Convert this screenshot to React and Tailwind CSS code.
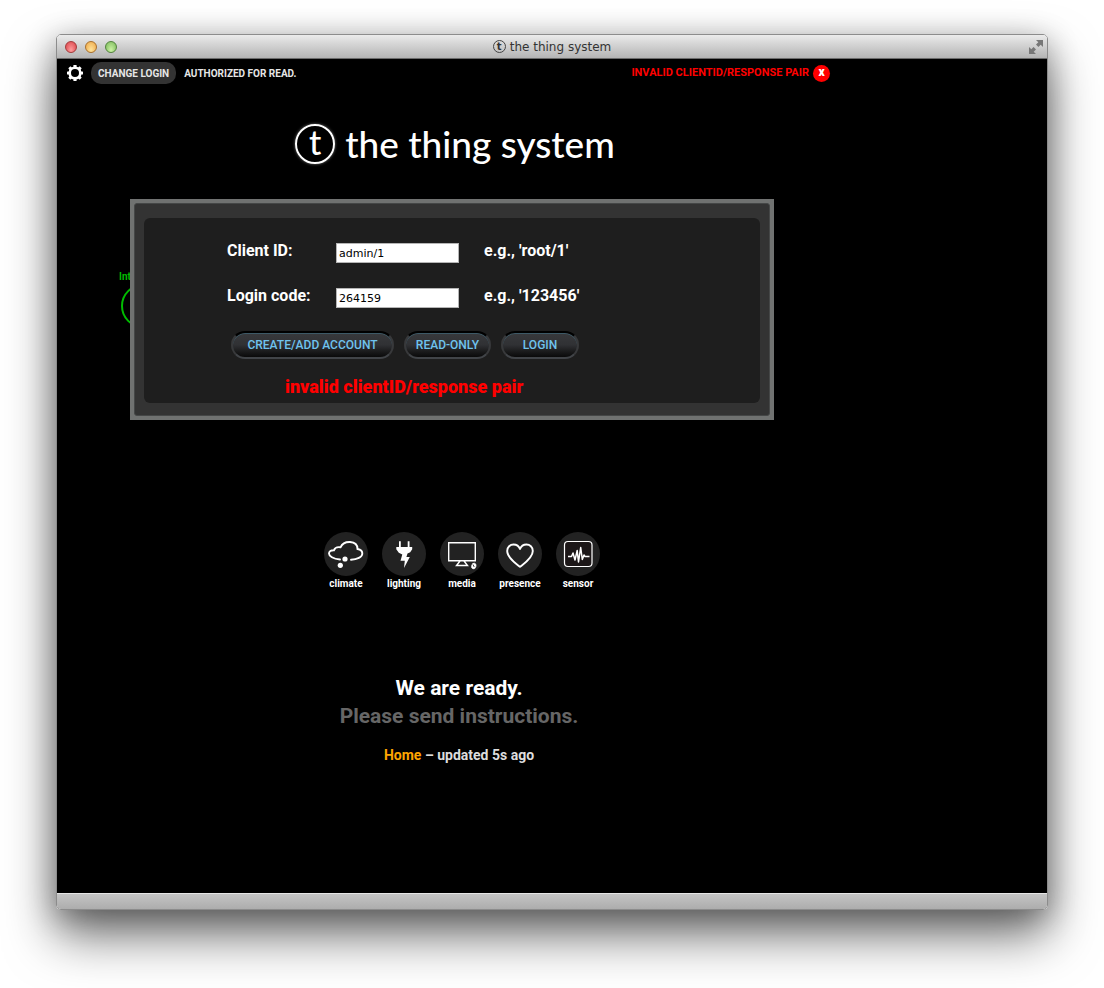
import React from "react";

function Gear() {
  const teeth = [0, 45, 90, 135, 180, 225, 270, 315];
  return (
    <svg viewBox="0 0 16 16" className="size-4" aria-hidden="true">
      <circle cx="8" cy="8" r="5.3" fill="none" stroke="#fff" strokeWidth="2.6" />
      {teeth.map((a) => (
        <rect key={a} x="6.4" y="0" width="3.2" height="3" rx=".5" fill="#fff" transform={`rotate(${a} 8 8)`} />
      ))}
    </svg>
  );
}

function Expand() {
  return (
    <svg viewBox="0 0 14 14" className="h-3.5 w-3.5" aria-hidden="true">
      <path d="M7 0h7v7l-2.3-2.3L9.4 7 7 4.6l2.3-2.3zM0 7l2.3 2.3L4.6 7 7 9.4l-2.3 2.3L7 14H0z" fill="#777" />
    </svg>
  );
}

const icons = {
  climate: (
    <>
      <path d="M16 27.500C9 27 5 24 5 21.500c0-2 2-3.500 5-3.300C11 15.500 13.500 14.800 16.500 15.300 18 12 21.500 9.800 26 10c4.500.3 7.500 2.500 7.500 7C36.500 17.500 38.500 19.500 38.300 22c-.3 3-5 5.500-11.300 5.700" fill="none" stroke="#fff" strokeWidth="1.900" strokeLinecap="round" />
      <circle cx="21" cy="27" r="2.600" fill="#fff" />
      <circle cx="16.300" cy="33.300" r="2.600" fill="#fff" />
    </>
  ),
  lighting: (
    <path d="M17 9.300h1.800V15h6.900V9.300h1.800V15h2.700v2.200l-2 3-2.700 1.400-1.100 3.400h3.400L22 36l.8-7.300h-4.300l1.800-6.200-3.500-1.800-2.500-3.500V15H17z" fill="#fff" />
  ),
  media: (
    <g fill="none" stroke="#fff" strokeWidth="1.400">
      <path d="M8.700 10.700h26.600v18H8.700zM20 29l-3.500 4.500h11L24 29" />
      <ellipse cx="33.800" cy="34" rx="2.200" ry="2.900" transform="rotate(15 33.800 34)" fill="#fff" strokeWidth=".6" />
      <path d="M33 32.500l1.200 2.500" stroke="#444" strokeWidth="1" />
    </g>
  ),
  presence: (
    <path d="M22 34.800C18 31.500 9.200 26 9.200 19c0-4 3-6.500 6.300-6.500 3.200 0 5.500 1.800 6.500 4.500 1-2.700 3.300-4.500 6.500-4.500 3.300 0 6.300 2.500 6.300 6.500 0 7-8.800 12.500-12.800 15.800z" fill="none" stroke="#fff" strokeWidth="1.900" strokeLinejoin="round" />
  ),
  sensor: (
    <g fill="none" stroke="#fff" strokeLinejoin="round">
      <rect x="8.500" y="9.500" width="27.500" height="25" rx="3.500" fill="#1c1718" strokeWidth="1.200" />
      <path d="M12 24.500h3.500l1.500-3.500 2 7 2.200-9.500 1.300 11.500L24.700 15.500l1.600 12 1.700-4.500 1 1.500h4.500" strokeWidth="1.500" />
    </g>
  ),
};

function DeviceClass({ name }) {
  return (
    <a href={`#${name}`} className="flex w-11 flex-col items-center">
      <span className="size-11 rounded-full bg-[#222]">
        <svg viewBox="0 0 44 44" className="size-11" aria-hidden="true">
          {icons[name]}
        </svg>
      </span>
      <span className="text-[10px] leading-4 font-bold">{name}</span>
    </a>
  );
}

function PillButton({ children, className }) {
  return (
    <button
      type="button"
      className={`h-7 rounded-full border-2 border-t-black border-r-[#38393b] border-b-[#414448] border-l-[#38393b] bg-linear-to-b from-[#38393c] via-[#303134] to-[#0a0a0a] text-[12px] font-medium text-[#6fc3ee] shadow-[inset_0_1px_0_#3d5966] ${className}`}
    >
      {children}
    </button>
  );
}

function Field({ id, label, value, hint }) {
  return (
    <div className="grid grid-cols-[109px_148px_1fr] items-center">
      <label htmlFor={id} className="text-[16px] leading-5 font-bold">{label}</label>
      <input
        id={id}
        type="text"
        defaultValue={value}
        className="mt-1 h-5 w-[123px] border border-[#b5b5b5] bg-white px-0.5 font-['DejaVu_Sans',sans-serif] text-[11px] text-black outline-none"
      />
      <span className="text-[16px] leading-5 font-bold">{hint}</span>
    </div>
  );
}

export default function App() {
  return (
    <div className="bg-white px-14 pt-[34px] pb-[78px] font-[Roboto,sans-serif]">
      <div className="overflow-hidden rounded-[5px] border border-[#8c8c8c] shadow-[0_26px_50px_rgba(0,0,0,0.55),0_6px_30px_rgba(0,0,0,0.3)]">
        <header className="grid h-6 grid-cols-[1fr_auto_1fr] items-center border-b border-[#6b6b6b] bg-linear-to-b from-[#ebebeb] to-[#b4b4b4] px-2">
          <div className="flex gap-2">
            <button type="button" aria-label="Close" className="size-3 rounded-full border border-[#a33a3a] bg-radial-[at_50%_80%] from-[#ff9d9d] to-[#d94046]" />
            <button type="button" aria-label="Minimize" className="size-3 rounded-full border border-[#a9702c] bg-radial-[at_50%_80%] from-[#ffe49b] to-[#eda544]" />
            <button type="button" aria-label="Zoom" className="size-3 rounded-full border border-[#53833d] bg-radial-[at_50%_80%] from-[#cdf3a5] to-[#78b858]" />
          </div>
          <div className="flex items-center gap-1 font-['DejaVu_Sans',sans-serif] text-[12px] text-[#333]">
            <span className="flex size-[13px] items-center justify-center rounded-full border border-[#444] text-[10px] leading-none font-bold">t</span>
            the thing system
          </div>
          <button type="button" aria-label="Full screen" className="-mr-1 justify-self-end">
            <Expand />
          </button>
        </header>

        <main className="bg-black text-white">
          <div className="relative max-w-[804px] pb-32">
            <div className="flex h-[25px] items-center pt-[3px] pr-[31px] pl-2.5 text-[10px] font-bold">
              <button type="button" aria-label="Settings">
                <Gear />
              </button>
              <button type="button" className="ml-2 h-[22px] rounded-[10px] bg-[#333] px-[7px] text-[#e6e6e6]">CHANGE LOGIN</button>
              <span className="ml-2 text-[#e6e6e6]">AUTHORIZED FOR READ.</span>
              <span className="ml-auto text-[11px] text-[#f00]">INVALID CLIENTID/RESPONSE PAIR</span>
              <button type="button" aria-label="Dismiss" className="ml-1 size-[17px] rounded-full bg-[#f00] pb-0.5 text-[12px] leading-none font-black">x</button>
            </div>

            <h1 className="mt-10 flex items-center justify-center gap-2.5 pr-2 font-[Lato,sans-serif] text-[37px] leading-10 font-medium">
              <span className="flex size-10 items-center justify-center rounded-full border-2 border-white pb-1 text-[34px] leading-none shadow-[0_0_3px_#777]">t</span>
              <span>the thing system</span>
            </h1>

            <div className="absolute top-[211px] left-[62px] text-[10px] leading-[14px] font-bold text-[#0b0]">
              Int
              <div className="ml-0.5 size-11 rounded-full border-2 border-[#0b0]" />
            </div>

            <form className="relative mx-auto mt-[35px] w-[644px] -translate-x-[7px] border-4 border-[#707271] bg-[#707271]">
              <div className="rounded-[3px] border border-[#454747] bg-[#333] px-[9px] pt-[14px] pb-3">
                <div className="rounded-md bg-[#1e1e1e] pt-[21px] pb-1 pl-[83px]">
                  <Field id="client" label="Client ID:" value="admin/1" hint="e.g., 'root/1'" />
                  <div className="mt-[21px]">
                    <Field id="code" label="Login code:" value="264159" hint="e.g., '123456'" />
                  </div>
                  <div className="mt-[23px] flex gap-2.5 pl-1">
                    <PillButton className="w-[163px]">CREATE/ADD ACCOUNT</PillButton>
                    <PillButton className="w-[87px]">READ-ONLY</PillButton>
                    <PillButton className="w-[78px]">LOGIN</PillButton>
                  </div>
                  <p className="mt-4 pl-[58px] text-[18px] leading-6 font-black text-[#f00]">invalid clientID/response pair</p>
                </div>
              </div>
            </form>

            <nav className="mt-28 flex justify-center gap-3.5 pl-1.5">
              <DeviceClass name="climate" />
              <DeviceClass name="lighting" />
              <DeviceClass name="media" />
              <DeviceClass name="presence" />
              <DeviceClass name="sensor" />
            </nav>

            <section className="mt-[82px] text-center font-bold">
              <p className="text-[21px] leading-7">We are ready.</p>
              <p className="text-[21px] leading-7 text-[#666]">Please send instructions.</p>
              <p className="mt-[15px] text-[14px] leading-5 text-[#ddd]">
                <a href="#home" className="text-[#ffa500]">Home</a> – updated 5s ago
              </p>
            </section>
          </div>
        </main>

        <footer className="h-4 border-t border-[#e5e5e5] bg-linear-to-b from-[#c4c4c4] to-[#adadad]" />
      </div>
    </div>
  );
}
